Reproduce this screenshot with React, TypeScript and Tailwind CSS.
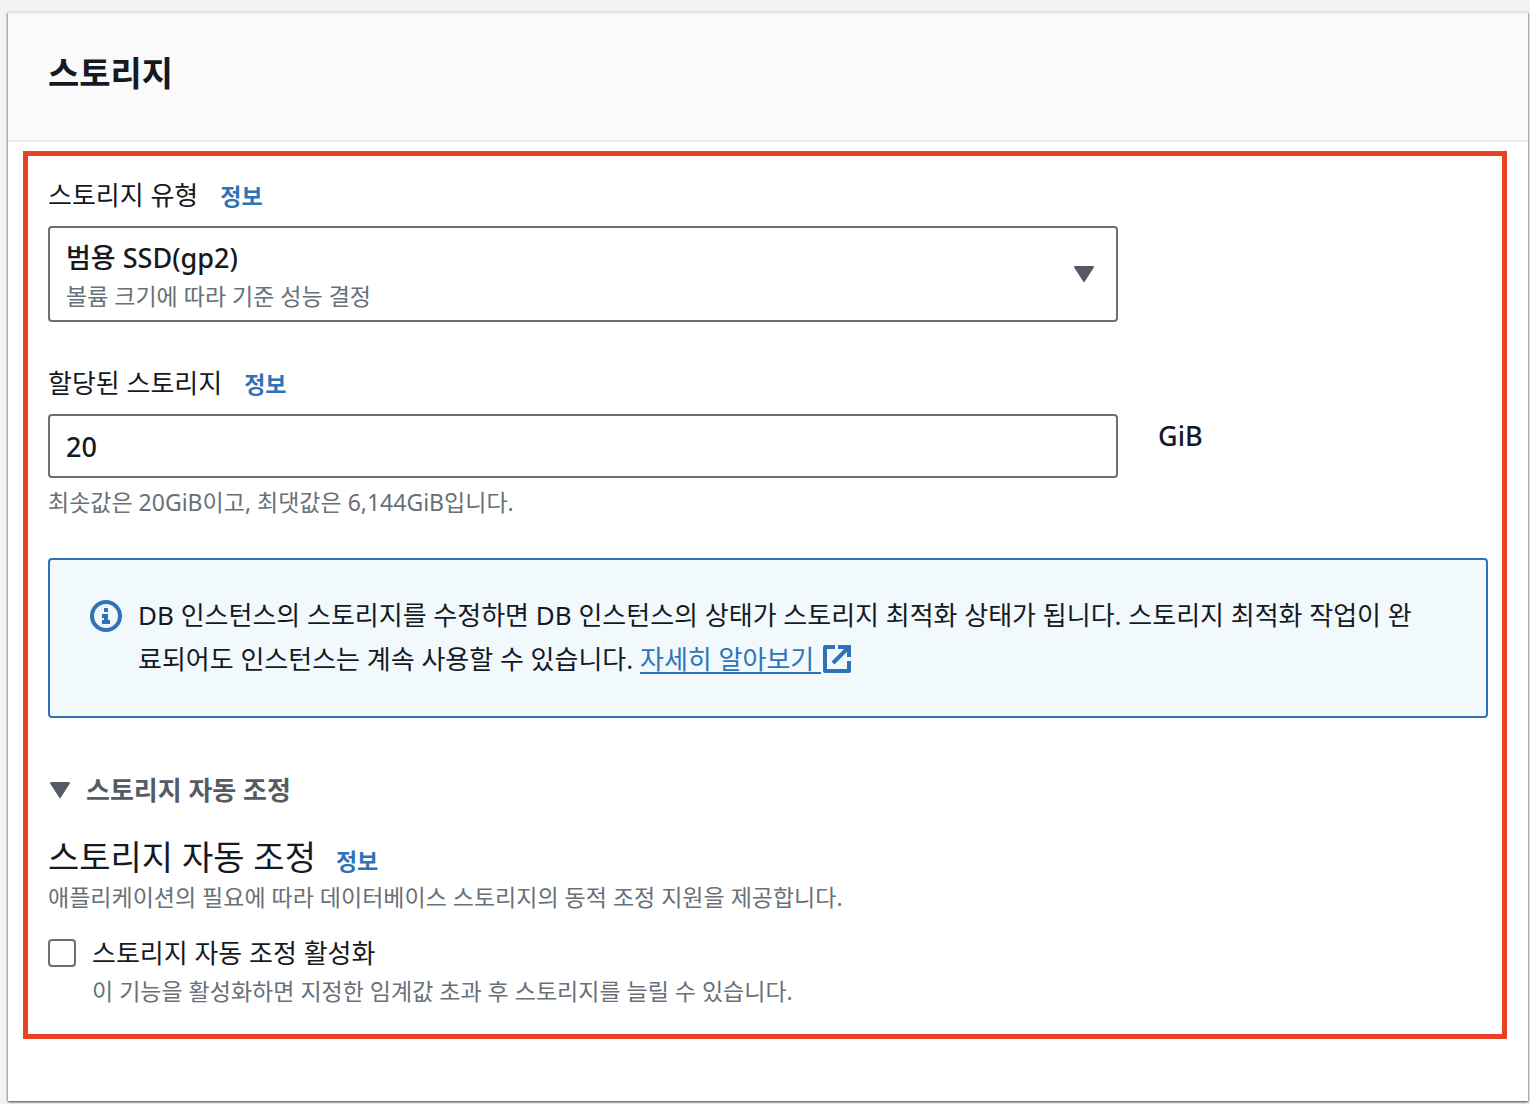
import { useState } from "react";
import type { ReactNode } from "react";

const STORAGE_TYPES = [
  {
    value: "gp2",
    label: "범용 SSD(gp2)",
    description: "볼륨 크기에 따라 기준 성능 결정",
  },
];

function CaretDown({ className }: { className?: string }) {
  return (
    <svg
      viewBox="0 0 20 16"
      className={`h-4 w-5 shrink-0 text-[#545b64] ${className ?? ""}`}
      fill="currentColor"
      stroke="currentColor"
      strokeWidth="2"
      strokeLinejoin="round"
      aria-hidden="true"
    >
      <path d="M1 1h18L10 15z" />
    </svg>
  );
}

function InfoIcon() {
  return (
    <svg
      viewBox="0 0 32 32"
      className="mt-[7px] h-8 w-8 shrink-0 text-[#2e73b8]"
      aria-hidden="true"
    >
      <circle cx="16" cy="16" r="14" fill="none" stroke="currentColor" strokeWidth="4" />
      <path fill="currentColor" d="M14 8h4v4h-4zM12 14h6v6h2v4h-8v-4h2v-2h-2z" />
    </svg>
  );
}

function ExternalIcon() {
  return (
    <svg
      viewBox="0 0 28 28"
      className="ml-[2px] inline-block h-7 w-7 align-[-4px]"
      fill="none"
      stroke="currentColor"
      strokeWidth="4"
      aria-hidden="true"
    >
      <path strokeLinejoin="round" d="M12 2H2v24h24V16" />
      <path d="M15 2h11v10M10 18 26 2" />
    </svg>
  );
}

function InfoLink() {
  return (
    <a href="#info" className="text-[23px] font-bold text-[#2e73b8] hover:underline">
      정보
    </a>
  );
}

function FieldLabel({ htmlFor, children }: { htmlFor: string; children: ReactNode }) {
  return (
    <div className="mb-[9px] flex h-11 items-baseline gap-[22px]">
      <label htmlFor={htmlFor}>{children}</label>
      <InfoLink />
    </div>
  );
}

export default function App() {
  const [storageType, setStorageType] = useState("gp2");
  const [size, setSize] = useState("20");
  const [open, setOpen] = useState(true);
  const [autoscaling, setAutoscaling] = useState(false);

  const selected = STORAGE_TYPES.find((type) => type.value === storageType);

  return (
    <div
      lang="ko"
      className="min-h-screen bg-[#f2f3f3] pt-3 pr-[2px] pb-[3px] pl-2 font-['Noto_Sans','Noto_Sans_CJK_KR',sans-serif] text-[26px] leading-[44px] text-[#16191f]"
    >
      <section className="border-t-2 border-[#eaeded] bg-white pb-[62px] shadow-[0_1px_2px_rgba(0,28,36,0.5),1px_1px_2px_rgba(0,28,36,0.25),-1px_1px_2px_rgba(0,28,36,0.25)]">
        <header className="border-b-2 border-[#eaeded] bg-[#fafafa] px-10 pt-[37px] pb-[45px]">
          <h1 className="text-[34px] font-bold">스토리지</h1>
        </header>

        <div className="mt-[9px] mr-[21px] ml-[15px] border-5 border-[#ea4025] pt-[17px] pr-[14px] pb-[27px] pl-5">
          <FieldLabel htmlFor="storage-type">스토리지 유형</FieldLabel>
          <div className="grid grid-cols-4 gap-10">
            <div className="relative col-span-3">
              <select
                id="storage-type"
                aria-describedby="storage-type-description"
                value={storageType}
                onChange={(event) => setStorageType(event.target.value)}
                className="block h-24 w-full appearance-none rounded-sm border-2 border-[#687078] bg-white px-4 pb-8 text-[27px] font-medium"
              >
                {STORAGE_TYPES.map((type) => (
                  <option key={type.value} value={type.value}>
                    {type.label}
                  </option>
                ))}
              </select>
              <p
                id="storage-type-description"
                className="pointer-events-none absolute bottom-2 left-[18px] text-[23px] leading-9 text-[#687078]"
              >
                {selected?.description}
              </p>
              <CaretDown className="pointer-events-none absolute top-10 right-6" />
            </div>
          </div>

          <div className="mt-[39px]">
            <FieldLabel htmlFor="allocated-storage">할당된 스토리지</FieldLabel>
            <div className="grid grid-cols-4 gap-10 text-[27px] font-medium">
              <input
                id="allocated-storage"
                type="text"
                inputMode="numeric"
                aria-describedby="allocated-storage-hint"
                value={size}
                onChange={(event) => setSize(event.target.value)}
                className="col-span-3 h-16 rounded-sm border-2 border-[#687078] bg-white px-4"
              />
              <span>GiB</span>
            </div>
            <p
              id="allocated-storage-hint"
              className="mt-[6px] text-[23px] leading-9 text-[#687078]"
            >
              최솟값은 20GiB이고, 최댓값은 6,144GiB입니다.
            </p>
          </div>

          <div className="mt-[38px] flex gap-4 rounded-sm border-2 border-[#2e73b8] bg-[#f1f9fd] pt-[33px] pr-14 pb-[35px] pl-10">
            <InfoIcon />
            <p>
              DB 인스턴스의 스토리지를 수정하면 DB 인스턴스의 상태가 스토리지 최적화
              상태가 됩니다. 스토리지 최적화 작업이 완료되어도 인스턴스는 계속 사용할 수
              있습니다.{" "}
              <a
                href="#learn-more"
                className="text-[#2e73b8] underline decoration-2 underline-offset-3"
              >
                자세히 알아보기 <ExternalIcon />
              </a>
            </p>
          </div>

          <button
            type="button"
            aria-expanded={open}
            onClick={() => setOpen(!open)}
            className="mt-[50px] flex items-center gap-4 pl-[2px] font-bold text-[#545b64]"
          >
            <CaretDown className={open ? "" : "-rotate-90"} />
            스토리지 자동 조정
          </button>

          {open && (
            <div className="mt-[23px]">
              <div className="flex h-11 items-baseline gap-5">
                <h2 className="text-[34px]">스토리지 자동 조정</h2>
                <InfoLink />
              </div>
              <p className="text-[23px] leading-9 text-[#687078]">
                애플리케이션의 필요에 따라 데이터베이스 스토리지의 동적 조정 지원을
                제공합니다.
              </p>
              <div className="mt-4 flex gap-4">
                <input
                  id="autoscaling"
                  type="checkbox"
                  checked={autoscaling}
                  onChange={(event) => setAutoscaling(event.target.checked)}
                  aria-describedby="autoscaling-description"
                  className="mt-2 h-7 w-7 shrink-0 appearance-none rounded-sm border-2 border-[#687078] bg-white checked:bg-[#2e73b8]"
                />
                <div>
                  <label htmlFor="autoscaling" className="block">
                    스토리지 자동 조정 활성화
                  </label>
                  <p
                    id="autoscaling-description"
                    className="text-[23px] leading-8 text-[#687078]"
                  >
                    이 기능을 활성화하면 지정한 임계값 초과 후 스토리지를 늘릴 수 있습니다.
                  </p>
                </div>
              </div>
            </div>
          )}
        </div>
      </section>
    </div>
  );
}
